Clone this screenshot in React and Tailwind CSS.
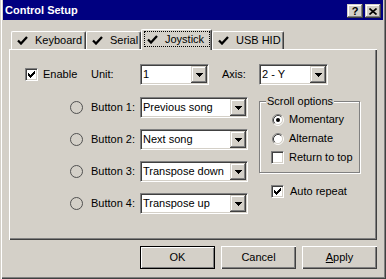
import React from "react";

const RAISED =
  "shadow-[inset_-1px_-1px_0_#404040,inset_1px_1px_0_#d4d0c8,inset_-2px_-2px_0_#808080,inset_2px_2px_0_#fff]";

function Arrow() {
  return (
    <div className={`w-[16px] h-[17px] my-[1px] mr-[1px] bg-[#d4d0c8] flex items-center justify-center ${RAISED}`}>
      <svg width="7" height="4" viewBox="0 0 7 4" shapeRendering="crispEdges">
        <rect x="0" y="0" width="7" height="1" fill="#000" />
        <rect x="1" y="1" width="5" height="1" fill="#000" />
        <rect x="2" y="2" width="3" height="1" fill="#000" />
        <rect x="3" y="3" width="1" height="1" fill="#000" />
      </svg>
    </div>
  );
}

function Combo({ w, value }) {
  return (
    <div
      className={`${w} h-[21px] shrink-0 flex items-stretch bg-white border border-t-[#808080] border-l-[#808080] border-r-white border-b-white shadow-[inset_1px_1px_0_#404040,inset_-1px_-1px_0_#d4d0c8]`}
    >
      <div className="flex-1 flex items-center pl-[2px] whitespace-nowrap overflow-hidden">{value}</div>
      <Arrow />
    </div>
  );
}

function Check({ checked }) {
  const rows = [
    [6, 0, 1],
    [5, 1, 2],
    [0, 2, 1],
    [4, 2, 3],
    [0, 3, 2],
    [3, 3, 3],
    [0, 4, 5],
    [1, 5, 3],
    [2, 6, 1],
  ];
  return (
    <div className="w-[13px] h-[13px] shrink-0 bg-white border border-t-[#808080] border-l-[#808080] border-r-white border-b-white shadow-[inset_1px_1px_0_#404040,inset_-1px_-1px_0_#d4d0c8] flex items-center justify-center">
      {checked && (
        <svg width="7" height="7" viewBox="0 0 7 7" shapeRendering="crispEdges">
          {rows.map(([x, y, l], i) => (
            <rect key={i} x={x} y={y} width={l} height="1" fill="#000" />
          ))}
        </svg>
      )}
    </div>
  );
}

function Radio({ checked }) {
  return (
    <svg width="12" height="12" viewBox="0 0 12 12" className="shrink-0">
      <circle cx="6" cy="6" r="4.5" fill="#fff" />
      <path d="M2.11 9.89 A5.5 5.5 0 0 1 9.89 2.11" fill="none" stroke="#808080" strokeWidth="1" />
      <path d="M2.11 9.89 A5.5 5.5 0 0 0 9.89 2.11" fill="none" stroke="#fff" strokeWidth="1" />
      <path d="M2.82 9.18 A4.5 4.5 0 0 1 9.18 2.82" fill="none" stroke="#404040" strokeWidth="1" />
      <path d="M2.82 9.18 A4.5 4.5 0 0 0 9.18 2.82" fill="none" stroke="#d4d0c8" strokeWidth="1" />
      {checked && <circle cx="6" cy="6" r="2" fill="#000" />}
    </svg>
  );
}

function Led() {
  return (
    <svg width="13" height="13" viewBox="0 0 13 13" className="shrink-0">
      <circle cx="6.5" cy="6.5" r="6" fill="none" stroke="#505050" strokeWidth="1" />
    </svg>
  );
}

function TabCheck() {
  return (
    <svg width="11" height="9" viewBox="0 0 11 9" className="shrink-0">
      <path d="M1 4.5 L4 7.5 L10 1" fill="none" stroke="#000" strokeWidth="2.3" />
    </svg>
  );
}

function Tab({ label, w, selected }) {
  if (selected) {
    return (
      <div
        className={`${w} h-[21px] -mb-[1px] relative z-10 bg-[#d4d0c8] border-t border-l border-white border-r border-r-[#404040] rounded-t-[2px] shadow-[inset_-1px_0_0_#808080] flex items-center pl-[2px] pb-[2px]`}
      >
        <div className="h-[16px] w-[66px] border border-dotted border-black flex items-center pl-[2px]">
          <TabCheck />
          <span className="ml-[7px] whitespace-nowrap">{label}</span>
        </div>
      </div>
    );
  }
  return (
    <div
      className={`${w} h-[18px] bg-[#d4d0c8] border-t border-l border-white border-r border-r-[#404040] rounded-t-[2px] shadow-[inset_-1px_0_0_#808080] flex items-center pl-[5px]`}
    >
      <TabCheck />
      <span className="ml-[7px] whitespace-nowrap">{label}</span>
    </div>
  );
}

function Button({ children, def }) {
  return (
    <div
      className={`w-[75px] h-[23px] flex items-center justify-center bg-[#d4d0c8] ${
        def
          ? "border border-black shadow-[inset_1px_1px_0_#fff,inset_-1px_-1px_0_#808080]"
          : "shadow-[inset_1px_1px_0_#fff,inset_-1px_-1px_0_#404040,inset_-2px_-2px_0_#808080]"
      }`}
    >
      {children}
    </div>
  );
}

function ButtonRow({ n, value }) {
  return (
    <div className="flex items-center h-[21px]">
      <Led />
      <span className="ml-[8px] w-[49px] whitespace-nowrap">Button {n}:</span>
      <Combo w="w-[108px]" value={value} />
    </div>
  );
}

export default function App() {
  return (
    <div className="relative w-[386px] h-[279px] overflow-hidden bg-[#d4d0c8] font-['Liberation_Sans',Arial,sans-serif] text-[11px] leading-none text-black flex flex-col shadow-[inset_1px_0_0_#d4d0c8,inset_2px_0_0_#fff,inset_-1px_-1px_0_#404040,inset_-2px_-2px_0_#808080]">
      {/* Title bar */}
      <div className="mx-[3px] h-[20px] shrink-0 bg-[#000080] flex items-center pl-[2px] pr-[2px]">
        <span className="font-bold text-white text-[11px]">Control Setup</span>
        <div className="ml-auto flex gap-[2px] mt-[2px]">
          <div className={`w-[16px] h-[14px] bg-[#d4d0c8] flex items-center justify-center font-bold text-[11px] ${RAISED}`}>
            ?
          </div>
          <div className={`w-[16px] h-[14px] bg-[#d4d0c8] flex items-center justify-center ${RAISED}`}>
            <svg width="8" height="7" viewBox="0 0 8 7">
              <path d="M0.5 0.5 L7.5 6.5 M7.5 0.5 L0.5 6.5" stroke="#000" strokeWidth="1.6" />
            </svg>
          </div>
        </div>
      </div>

      {/* Tabs */}
      <div className="mt-[9px] ml-[11px] h-[20px] flex items-end shrink-0">
        <Tab w="w-[75px]" label="Keyboard" />
        <Tab w="w-[55px]" label="Serial" />
        <Tab w="w-[71px]" label="Joystick" selected />
        <Tab w="w-[72px]" label="USB HID" />
      </div>

      {/* Panel */}
      <div className="mx-[9px] h-[191px] shrink-0 flex flex-col shadow-[inset_1px_1px_0_#fff,inset_-1px_-1px_0_#404040,inset_-2px_-2px_0_#808080]">
        <div className="flex items-center h-[21px] mt-[15px] pl-[16px]">
          <Check checked />
          <span className="ml-[5px] w-[48px]">Enable</span>
          <span className="w-[49px]">Unit:</span>
          <Combo w="w-[69px]" value="1" />
          <span className="ml-[13px] w-[37px]">Axis:</span>
          <Combo w="w-[69px]" value="2 - Y" />
        </div>

        <div className="flex mt-[12px]">
          <div className="flex flex-col gap-[11px] pl-[61px]">
            <ButtonRow n={1} value="Previous song" />
            <ButtonRow n={2} value="Next song" />
            <ButtonRow n={3} value="Transpose down" />
            <ButtonRow n={4} value="Transpose up" />
          </div>
          <div className="ml-[11px] flex flex-col">
            <div className="mt-[4px] relative w-[101px] h-[72px] border border-[#808080] shadow-[inset_1px_1px_0_#fff,1px_1px_0_#fff] pt-[8px] pl-[12px] flex flex-col">
              <span className="absolute -top-[6px] left-[6px] bg-[#d4d0c8] px-[1px] whitespace-nowrap">Scroll options</span>
              <div className="h-[19px] flex items-center">
                <Radio checked />
                <span className="ml-[5px]">Momentary</span>
              </div>
              <div className="h-[19px] flex items-center">
                <Radio />
                <span className="ml-[5px]">Alternate</span>
              </div>
              <div className="h-[19px] flex items-center -ml-[1px]">
                <Check />
                <span className="ml-[5px] whitespace-nowrap">Return to top</span>
              </div>
            </div>
            <div className="mt-[12px] ml-[12px] flex items-center">
              <Check checked />
              <span className="ml-[6px] whitespace-nowrap">Auto repeat</span>
            </div>
          </div>
        </div>
      </div>

      {/* Buttons */}
      <div className="mt-[6px] pr-[9px] flex justify-end gap-[6px]">
        <Button def>OK</Button>
        <Button>Cancel</Button>
        <Button>
          <span>
            <span className="underline underline-offset-1">A</span>pply
          </span>
        </Button>
      </div>
    </div>
  );
}
